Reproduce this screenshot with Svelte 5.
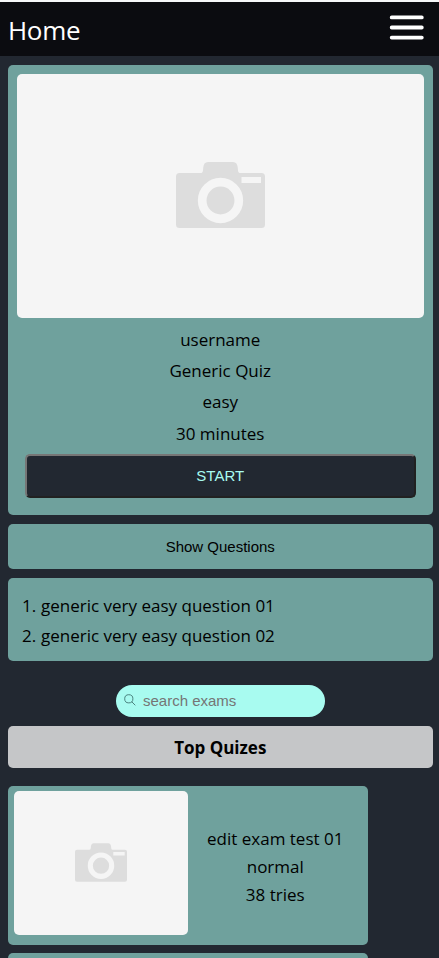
<script>
  const details = ['username', 'Generic Quiz', 'easy', '30 minutes'];
  const questions = ['generic very easy question 01', 'generic very easy question 02'];
  const exams = [{ title: 'edit exam test 01', level: 'normal', tries: 38 }];
</script>

{#snippet camera()}
  <svg class="camera" viewBox="0 0 89 66" aria-hidden="true">
    <path fill="#ddd" d="M3.500 11H24.500C27 11 27 9 27.200 6C27.500 2 29 0 32 0H57C60 0 61.500 2 61.800 6C62 9 62 11 64.500 11H85.500Q89 11 89 14.500V62.500Q89 66 85.500 66H3.500Q0 66 0 62.500V14.500Q0 11 3.500 11Z" />
    <circle cx="44.500" cy="38.500" r="18.300" fill="none" stroke="#f5f5f5" stroke-width="8.700" />
    <rect x="65.500" y="15" width="19.500" height="6" fill="#f5f5f5" />
  </svg>
{/snippet}

<div class="page">
  <header>
    <h1>Home</h1>
    <button class="menu" aria-label="Menu">
      <svg width="36" height="26" viewBox="0 0 36 26">
        <path d="M2.700 2.400H32.800M2.700 12.500H32.800M2.700 22.600H32.800" stroke="#fff" stroke-width="3.800" stroke-linecap="round" />
      </svg>
    </button>
  </header>
  <main>
    <section class="quiz">
      <div class="photo">{@render camera()}</div>
      {#each details as line}<p>{line}</p>{/each}
      <button class="start">START</button>
    </section>
    <button class="show">Show Questions</button>
    <ol>
      {#each questions as question, i}<li><span class="num">{i + 1}.</span><span>{question}</span></li>{/each}
    </ol>
    <label class="search">
      <svg width="12" height="12" viewBox="0 0 12 12" fill="none" stroke="#4b837f">
        <circle cx="4.800" cy="4.800" r="4.100" /><path d="M7.700 7.700L11.300 11.300" />
      </svg>
      <input placeholder="search exams" />
    </label>
    <h2>Top Quizes</h2>
    {#each exams as exam}
      <article>
        <div class="thumb">{@render camera()}</div>
        <div class="info">
          <span>{exam.title}</span>
          <span>{exam.level}</span>
          <span>{exam.tries} tries</span>
        </div>
      </article>
    {/each}
    <article></article>
  </main>
</div>

<style>
  :global(body) { margin: 0; background: #222831; }
  * { box-sizing: border-box; }
  .page {
    height: 958px;
    overflow: hidden;
    border-top: 2px solid #f6f8f9;
    background: #222831;
    color: #000;
    font: 17px/31px "Open Sans", "Noto Sans", sans-serif;
  }
  header {
    height: 54px;
    padding: 0 14px 0 8px;
    background: #0b0c10;
    display: flex;
    align-items: center;
    justify-content: space-between;
  }
  h1 { margin: 2px 0 0; color: #fff; font-size: 26px; font-weight: 400; letter-spacing: -0.3px; }
  .menu { padding: 0; border: 0; background: none; height: 26px; margin-top: -3px; }
  .menu svg { display: block; }
  main { padding: 9px 6.500px 0 8px; display: flex; flex-direction: column; }
  .quiz {
    height: 450px;
    padding: 9px 9px 0;
    border-radius: 5px;
    background: #6fa19d;
    display: flex;
    flex-direction: column;
    text-align: center;
  }
  .photo, .thumb {
    border-radius: 5px;
    background: #f5f5f5;
    display: flex;
    align-items: center;
    justify-content: center;
    flex: none;
  }
  .photo { height: 243.500px; margin-bottom: 6.200px; padding: 0 0 1px 1px; }
  .camera { display: block; width: 89px; height: 66px; }
  p { margin: 0; height: 31.300px; }
  .start {
    height: 44px;
    margin: 5.300px 8px 0;
    padding: 0 0 2px;
    border: 2px solid;
    border-color: #767676 #212121 #212121 #767676;
    border-radius: 5px;
    background: #222831;
    color: #a8fbf0;
    font: 15px "Liberation Sans", Arial, sans-serif;
  }
  .show {
    height: 45px;
    margin-top: 9px;
    border: 0;
    border-radius: 5px;
    background: #6fa19d;
    color: #000;
    font: 15px "Liberation Sans", Arial, sans-serif;
  }
  ol {
    height: 82.500px;
    margin: 9px 0 0;
    padding: 13px 14px;
    list-style: none;
    border-radius: 5px;
    background: #6fa19d;
    line-height: 30px;
  }
  li { display: flex; }
  .num { width: 19px; }
  .search {
    width: 209px;
    height: 32.500px;
    margin: 24px 0 0 108px;
    padding: 0 8px 0 7.500px;
    border-radius: 17px;
    background: #a8fbf0;
    display: flex;
    align-items: center;
    gap: 7.500px;
  }
  .search svg { margin-bottom: 1px; }
  input {
    min-width: 0;
    flex: 1;
    padding: 0;
    border: 0;
    outline: 0;
    background: none;
    font: 15px "Liberation Sans", Arial, sans-serif;
  }
  input::placeholder { color: #757575; }
  h2 {
    height: 42.500px;
    margin: 8.500px 0 17.500px;
    border-radius: 5px;
    background: #c5c6c8;
    font-size: 17px;
    font-weight: 700;
    line-height: 44px;
    text-align: center;
  }
  article {
    width: 360px;
    height: 159px;
    flex: none;
    margin-bottom: 8.500px;
    padding: 5.500px;
    border-radius: 5px;
    background: #6fa19d;
    display: flex;
  }
  .thumb { width: 174.500px; height: 144px; padding-bottom: 1px; }
  .thumb .camera { width: 52px; height: 39px; }
  .info {
    flex: 1;
    height: 148px;
    padding-top: 4px;
    line-height: 28px;
    display: flex;
    flex-direction: column;
    align-items: center;
    justify-content: center;
  }
</style>
